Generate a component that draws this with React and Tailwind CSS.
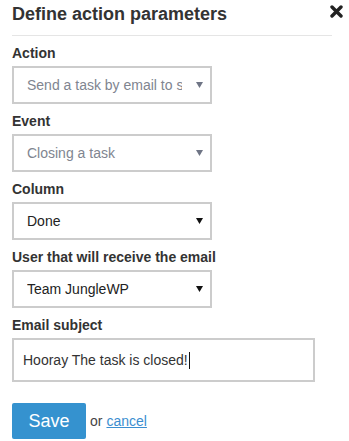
import React from "react";

function Arrow({ color }) {
  return (
    <svg width="7" height="6" viewBox="0 0 7 6" className="shrink-0">
      <path d="M0 0 L7 0 L3.5 6 Z" fill={color} />
    </svg>
  );
}

function SelectBox({ text, disabled }) {
  return (
    <div className="flex h-[38px] w-[200px] items-center border-2 border-[#cccccc] bg-white pl-[13px] pr-[7px]">
      <div
        className={
          "flex-1 overflow-hidden whitespace-nowrap text-[14px] " +
          (disabled ? "text-[#808590]" : "text-[#222222]")
        }
      >
        {text}
      </div>
      <div className="w-[14px]" />
      <Arrow color={disabled ? "#6f7585" : "#111111"} />
    </div>
  );
}

function Label({ children }) {
  return (
    <div className="mb-[3px] text-[14px] font-bold leading-[20px] text-[#333333]">
      {children}
    </div>
  );
}

export default function App() {
  return (
    <div
      className="relative h-[441px] w-[349px] bg-white"
      style={{ fontFamily: '"Liberation Sans", Arial, sans-serif' }}
    >
      <div className="pl-[12px]">
        <div className="flex h-[35px] items-start pt-[2px]">
          <div className="text-[18px] font-bold leading-[24px] text-[#333333]">
            Define action parameters
          </div>
        </div>
        <div className="h-px w-[320px] bg-[#e5e5e5]" />
        <div className="pt-[7px]">
          <div className="mb-[7px]">
            <Label>Action</Label>
            <SelectBox text="Send a task by email to someone" disabled />
          </div>
          <div className="mb-[7px]">
            <Label>Event</Label>
            <SelectBox text="Closing a task" disabled />
          </div>
          <div className="mb-[7px]">
            <Label>Column</Label>
            <SelectBox text="Done" />
          </div>
          <div className="mb-[7px]">
            <Label>User that will receive the email</Label>
            <SelectBox text="Team JungleWP" />
          </div>
          <div>
            <Label>Email subject</Label>
            <div className="flex h-[44px] w-[303px] items-center border-2 border-[#cccccc] bg-white pl-[9px]">
              <span className="text-[14px] text-[#333333]">Hooray The task is closed!</span>
              <span className="ml-[1px] h-[17px] w-px bg-[#111111]" />
            </div>
          </div>
          <div className="mt-[21px] flex items-center">
            <div className="flex h-[36px] w-[74px] items-center justify-center rounded-[2px] bg-[#3592cf] text-[18px] text-white">
              Save
            </div>
            <span className="ml-[4px] text-[14px] text-[#444444]">or</span>
            <span className="ml-[4px] text-[14px] text-[#3b8ed0] underline">cancel</span>
          </div>
        </div>
      </div>
      <svg
        className="absolute left-[330px] top-[5px]"
        width="13"
        height="13"
        viewBox="0 0 13 13"
      >
        <path
          d="M2 2 L11 11 M11 2 L2 11"
          stroke="#222222"
          strokeWidth="3.4"
          strokeLinecap="round"
        />
      </svg>
    </div>
  );
}
